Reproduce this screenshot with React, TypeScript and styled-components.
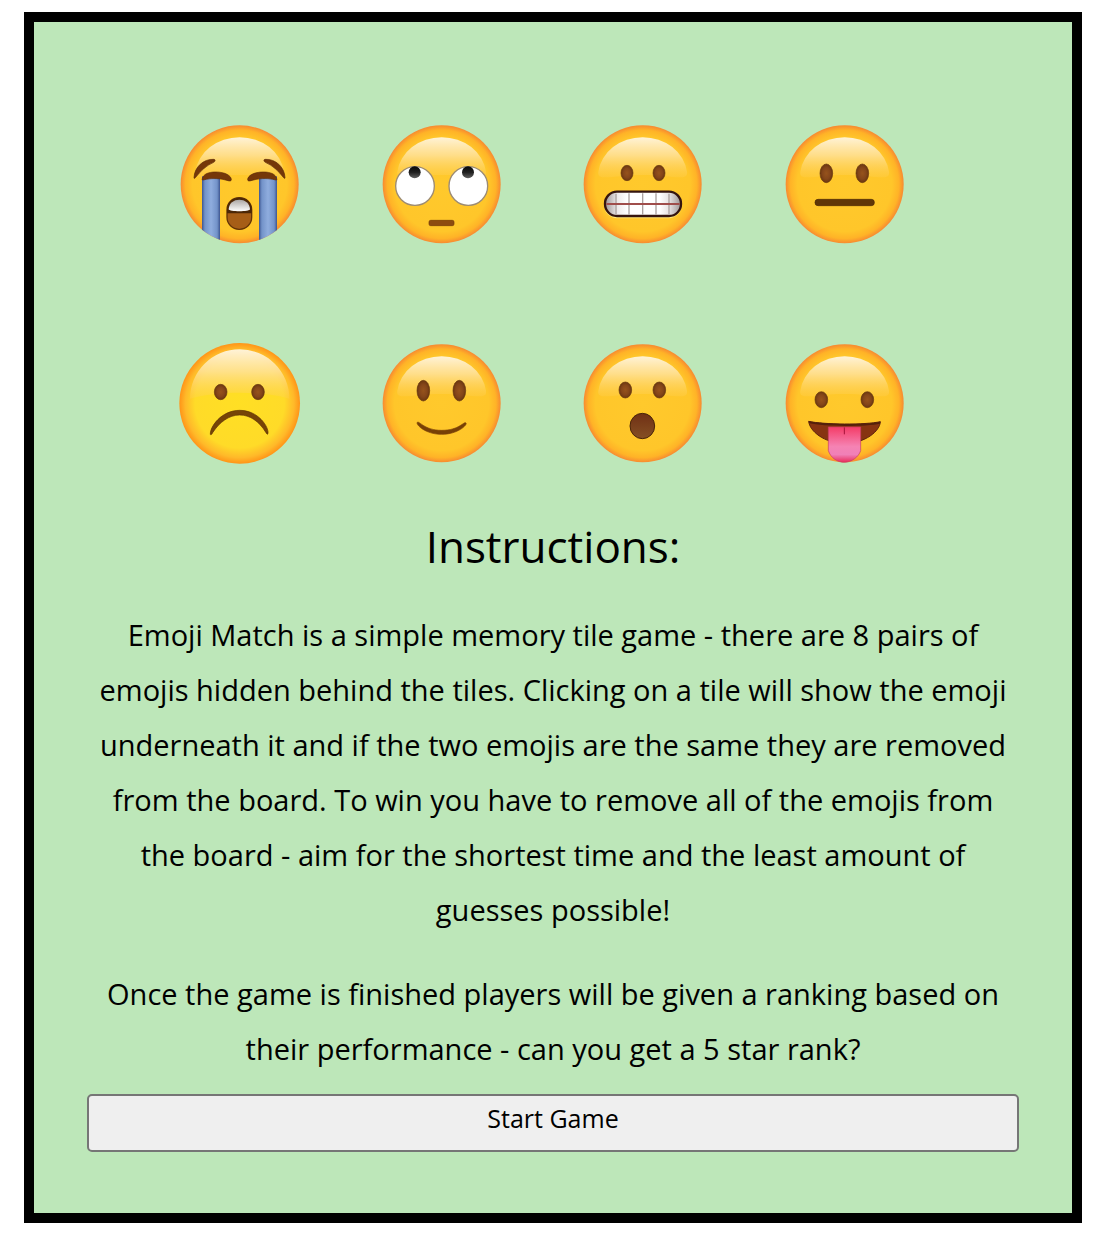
import React from "react";
import styled, { createGlobalStyle } from "styled-components";

const GlobalStyle = createGlobalStyle`
  * {
    box-sizing: border-box;
  }
  body {
    margin: 0;
    background: #ffffff;
    color: #000000;
    font-family: "Open Sans", "Noto Sans", sans-serif;
  }
`;

const Panel = styled.main`
  margin: 12px 15px 15px 24px;
  padding: 93px 53px 61px;
  border: 10px solid #000000;
  background: #bde7b9;
  text-align: center;
`;

const EmojiGrid = styled.section`
  display: grid;
  grid-template-columns: repeat(4, 1fr);
  row-gap: 79px;
  padding: 0 73px 0 52px;
  justify-items: center;
`;

const EmojiDrawing = styled.svg`
  display: block;
  width: 140px;
  height: 140px;
`;

const Title = styled.h1`
  margin: 42px 0 31px;
  font-size: 44px;
  line-height: 60px;
  font-weight: 400;
`;

const Paragraph = styled.p`
  margin: 0 0 29px;
  padding: 0 8px;
  font-size: 29px;
  line-height: 55px;

  &:last-of-type {
    margin-bottom: 18px;
  }
`;

const StartButton = styled.button`
  display: block;
  width: 100%;
  padding: 4px 6px 14px;
  border: 2px solid #767676;
  border-radius: 5px;
  background: #efefef;
  color: #000000;
  font-family: inherit;
  font-size: 25px;
  line-height: 36px;
  cursor: pointer;
`;

const DARK = "#4a2508";

function Gradients() {
  return (
    <defs>
      <radialGradient id="face" cx="50%" cy="50%" r="50%">
        <stop offset="0" stopColor="#ffc92c" />
        <stop offset="0.8" stopColor="#ffc62a" />
        <stop offset="0.92" stopColor="#ffb327" />
        <stop offset="1" stopColor="#f78a31" />
      </radialGradient>
      <radialGradient id="paleFace" cx="50%" cy="50%" r="50%">
        <stop offset="0" stopColor="#ffdf24" />
        <stop offset="0.74" stopColor="#ffdb28" />
        <stop offset="0.9" stopColor="#ffb929" />
        <stop offset="1" stopColor="#ff9418" />
      </radialGradient>
      <linearGradient id="shine" x1="0" y1="0" x2="0" y2="1">
        <stop offset="0" stopColor="#fff3d8" />
        <stop offset="0.45" stopColor="#ffe29a" stopOpacity="0.85" />
        <stop offset="1" stopColor="#ffd052" stopOpacity="0.3" />
      </linearGradient>
      <radialGradient id="eye">
        <stop offset="0" stopColor="#96531c" />
        <stop offset="0.6" stopColor="#85461a" />
        <stop offset="1" stopColor="#6b3710" />
      </radialGradient>
      <linearGradient id="tear" x1="0" y1="0" x2="1" y2="0">
        <stop offset="0" stopColor="#3d5590" />
        <stop offset="0.16" stopColor="#7393c9" />
        <stop offset="0.5" stopColor="#8fadde" />
        <stop offset="0.84" stopColor="#7393c9" />
        <stop offset="1" stopColor="#3d5590" />
      </linearGradient>
      <linearGradient id="pupil" x1="0" y1="0" x2="0" y2="1">
        <stop offset="0" stopColor="#080808" />
        <stop offset="0.5" stopColor="#202020" />
        <stop offset="1" stopColor="#626262" />
      </linearGradient>
      <linearGradient id="upperTeeth" x1="0" y1="0" x2="0" y2="1">
        <stop offset="0" stopColor="#aaa6a4" />
        <stop offset="1" stopColor="#ffffff" />
      </linearGradient>
      <linearGradient id="teeth" x1="0" y1="0" x2="1" y2="0">
        <stop offset="0" stopColor="#9d9595" />
        <stop offset="0.16" stopColor="#eeeaea" />
        <stop offset="0.3" stopColor="#ffffff" />
        <stop offset="0.72" stopColor="#ffffff" />
        <stop offset="0.85" stopColor="#e5e0e0" />
        <stop offset="1" stopColor="#9d9595" />
      </linearGradient>
      <linearGradient id="openMouth" x1="0" y1="0" x2="0" y2="1">
        <stop offset="0" stopColor="#703015" />
        <stop offset="1" stopColor="#855024" />
      </linearGradient>
      <linearGradient id="tongue" x1="0" y1="0" x2="0" y2="1">
        <stop offset="0" stopColor="#f43c67" />
        <stop offset="0.55" stopColor="#f583b3" />
        <stop offset="0.78" stopColor="#f080b7" />
        <stop offset="1" stopColor="#e92b5a" />
      </linearGradient>
      <clipPath id="faceClip">
        <circle cx="209" cy="208" r="177" />
      </clipPath>
    </defs>
  );
}

type EmojiProps = { label: string; pale?: boolean; children: React.ReactNode };

function Emoji({ label, pale, children }: EmojiProps) {
  return (
    <EmojiDrawing viewBox="0 0 420 420" role="img" aria-label={label}>
      <circle cx="209" cy="208" r={pale ? 181 : 177} fill={pale ? "url(#paleFace)" : "url(#face)"} />
      <path
        d={
          pale
            ? "M60 194A149 148 0 0 1 358 194C314 181 262 176 209 176C156 176 104 181 60 194Z"
            : "M76 170A134 118 0 0 1 342 170C344 181 338 187 324 187C288 187 262 180 209 180C156 180 130 187 94 187C80 187 74 181 76 170Z"
        }
        fill="url(#shine)"
      />
      {children}
    </EmojiDrawing>
  );
}

type EyesProps = { left: number; right: number; y: number; rx: number; ry: number };

function Eyes({ left, right, y, rx, ry }: EyesProps) {
  return (
    <g fill="url(#eye)" stroke="#68380d" strokeWidth="2">
      <ellipse cx={left} cy={y} rx={rx} ry={ry} />
      <ellipse cx={right} cy={y} rx={rx} ry={ry} />
    </g>
  );
}

export default function App() {
  return (
    <>
      <GlobalStyle />
      <Panel>
        <EmojiGrid aria-label="Emojis">
          <Emoji label="Crying">
            <Gradients />
            <g clipPath="url(#faceClip)">
              <rect x="96" y="184" width="54" height="210" fill="url(#tear)" />
              <rect x="267" y="184" width="54" height="210" fill="url(#tear)" />
            </g>
            <g fill="#753709" stroke="#5c2b08" strokeWidth="2">
              <path d="M72 188C73 157 100 131 132 133C137 134 136 139 131 142C108 152 92 168 77 187C74 191 72 191 72 188Z" />
              <path d="M345 188C344 157 317 131 285 133C280 134 281 139 286 142C309 152 325 168 340 187C343 191 345 191 345 188Z" />
              <path d="M97 191C100 177 116 171 137 171C165 171 184 182 184 194C184 199 178 198 174 197C150 190 129 188 99 195C97 196 96 194 97 191Z" />
              <path d="M320 191C317 177 301 171 280 171C252 171 233 182 233 194C233 199 239 198 243 197C267 190 288 188 318 195C320 196 321 194 320 191Z" />
            </g>
            <rect x="171" y="248" width="74" height="95" rx="36" fill="#a65e17" stroke="#633407" strokeWidth="4" />
            <path d="M171 295V284C171 261 187 248 208 248C229 248 245 261 245 284V295Z" fill="#4c2706" />
            <path d="M176 283C177 264 191 254 208 254C225 254 239 264 240 283C239 291 177 291 176 283Z" fill="url(#upperTeeth)" />
          </Emoji>

          <Emoji label="Rolling eyes">
            <g fill="#ffffff" stroke="#9b8b75" strokeWidth="4">
              <circle cx="129" cy="213" r="58" />
              <circle cx="289" cy="213" r="58" />
            </g>
            <g fill="url(#pupil)">
              <circle cx="128" cy="172" r="18" />
              <circle cx="288" cy="172" r="18" />
            </g>
            <rect x="171" y="316" width="75" height="16" rx="5" fill="#8d4b10" stroke="#713909" strokeWidth="2" />
          </Emoji>

          <Emoji label="Grimacing">
            <Eyes left={162} right={258} y={174} rx={18} ry={23} />
            <rect x="94" y="233" width="231" height="77" rx="38" fill="#ffe777" />
            <rect x="96" y="230" width="228" height="73" rx="36" fill="url(#teeth)" stroke="#35150f" strokeWidth="7" />
            <path d="M129 236V297M168 235V299M209 235V299M249 235V299M288 236V297" stroke="#aaa1a0" strokeWidth="4" />
            <path d="M100 267H320" stroke="#a04d4b" strokeWidth="6" />
          </Emoji>

          <Emoji label="Neutral">
            <Eyes left={154} right={262} y={175} rx={19} ry={28} />
            <rect x="120" y="253" width="178" height="19" rx="9" fill="#603607" stroke="#4c2905" strokeWidth="2" />
          </Emoji>

          <Emoji label="Frowning" pale>
            <Eyes left={152} right={264} y={174} rx={19} ry={23} />
            <path d="M121 301C120 278 154 229 209 229C265 229 297 279 294 299C292 302 290 300 288 296C267 261 239 243 209 243C177 243 148 265 128 296C125 302 122 304 121 301Z" fill="#764407" stroke="#5c3305" strokeWidth="2" />
          </Emoji>

          <Emoji label="Slightly smiling">
            <Eyes left={154} right={262} y={170} rx={19} ry={31} />
            <path d="M136 265C142 260 157 289 209 289C263 289 275 261 282 267C287 272 258 301 209 301C158 301 130 270 136 265Z" fill="#784006" stroke="#784006" strokeWidth="2" />
          </Emoji>

          <Emoji label="Surprised">
            <Eyes left={157} right={259} y={168} rx={19} ry={24} />
            <ellipse cx="208" cy="276" rx="37" ry="38" fill="url(#openMouth)" stroke={DARK} strokeWidth="3" />
          </Emoji>

          <Emoji label="Sticking out tongue">
            <Eyes left={139} right={277} y={197} rx={19} ry={24} />
            <path d="M101 262C145 272 272 273 316 263C315 291 271 328 209 328C147 328 104 291 101 262Z" fill="#873411" stroke="#5b240b" strokeWidth="3" />
            <path d="M101 262C145 272 272 273 316 263L315 269C275 278 143 278 103 268Z" fill="#54200b" />
            <path d="M160 279H257V350C251 369 230 384 209 385C186 385 167 371 160 350Z" fill="url(#tongue)" stroke="#c73d64" strokeWidth="2" />
            <path d="M208 280V301" stroke="#a51239" strokeWidth="3" />
          </Emoji>
        </EmojiGrid>

        <Title>Instructions:</Title>
        <Paragraph>
          Emoji Match is a simple memory tile game - there are 8 pairs of emojis hidden behind the
          tiles. Clicking on a tile will show the emoji underneath it and if the two emojis are the
          same they are removed from the board. To win you have to remove all of the emojis from the
          board - aim for the shortest time and the least amount of guesses possible!
        </Paragraph>
        <Paragraph>
          Once the game is finished players will be given a ranking based on their performance - can
          you get a 5 star rank?
        </Paragraph>
        <StartButton type="button">Start Game</StartButton>
      </Panel>
    </>
  );
}
